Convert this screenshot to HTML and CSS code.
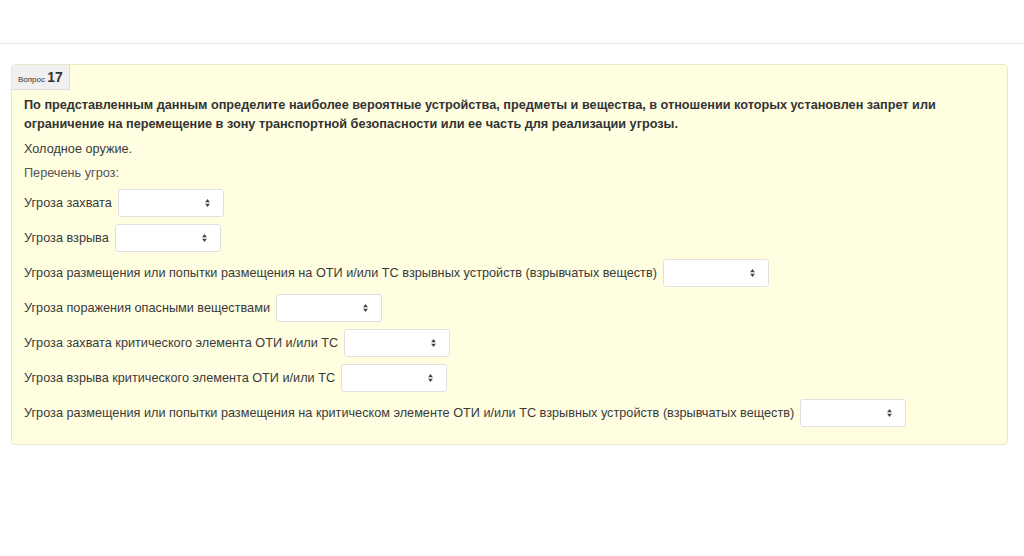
FILE: index.html
```html
<!DOCTYPE html>
<html lang="ru">

<head>
    <meta charset="UTF-8">
    <title>Вопрос 17</title>
    <link rel="stylesheet" href="styles.css">
</head>

<body>
    <div class="topbar"></div>

    <div class="question">
        <div class="qno">Вопрос <b>17</b></div>
        <div class="qtext">
            <p class="lead">По представленным данным определите наиболее вероятные устройства, предметы и вещества, в отношении которых установлен запрет или ограничение на перемещение в зону транспортной безопасности или ее часть для реализации угрозы.</p>
            <p>Холодное оружие.</p>
            <p class="muted">Перечень угроз:</p>

            <div class="row">Угроза захвата <span class="sel"><select></select><svg viewBox="0 0 6 10"><path d="M0 4 L3 0 L6 4Z M0 6 L3 10 L6 6Z" /></svg></span></div>
            <div class="row">Угроза взрыва <span class="sel"><select></select><svg viewBox="0 0 6 10"><path d="M0 4 L3 0 L6 4Z M0 6 L3 10 L6 6Z" /></svg></span></div>
            <div class="row">Угроза размещения или попытки размещения на ОТИ и/или ТС взрывных устройств (взрывчатых веществ) <span class="sel"><select></select><svg viewBox="0 0 6 10"><path d="M0 4 L3 0 L6 4Z M0 6 L3 10 L6 6Z" /></svg></span></div>
            <div class="row">Угроза поражения опасными веществами <span class="sel"><select></select><svg viewBox="0 0 6 10"><path d="M0 4 L3 0 L6 4Z M0 6 L3 10 L6 6Z" /></svg></span></div>
            <div class="row">Угроза захвата критического элемента ОТИ и/или ТС <span class="sel"><select></select><svg viewBox="0 0 6 10"><path d="M0 4 L3 0 L6 4Z M0 6 L3 10 L6 6Z" /></svg></span></div>
            <div class="row">Угроза взрыва критического элемента ОТИ и/или ТС <span class="sel"><select></select><svg viewBox="0 0 6 10"><path d="M0 4 L3 0 L6 4Z M0 6 L3 10 L6 6Z" /></svg></span></div>
            <div class="row">Угроза размещения или попытки размещения на критическом элементе ОТИ и/или ТС взрывных устройств (взрывчатых веществ) <span class="sel"><select></select><svg viewBox="0 0 6 10"><path d="M0 4 L3 0 L6 4Z M0 6 L3 10 L6 6Z" /></svg></span></div>
        </div>
    </div>
</body>

</html>
```

FILE: styles.css
```css
* {
    margin: 0;
    padding: 0;
    box-sizing: border-box;
}

body {
    font-family: 'Liberation Sans', Arial, sans-serif;
    font-size: 12.7px;
    color: #3a3a3a;
    background: #fff;
}

.topbar {
    height: 44px;
    border-bottom: 1px solid #e7e7e7;
}

.question {
    margin: 20px 16px 0 11px;
    background: #fffee1;
    border: 1px solid #e9e8c6;
    border-radius: 4px;
    padding-bottom: 10px;
}

.qno {
    display: inline-block;
    background: #f0f0f0;
    border: 1px solid #dcdcdc;
    border-width: 0 1px 1px 0;
    padding: 4px 6px 4px 6px;
    font-size: 8px;
    color: #333;
}

.qno b {
    font-size: 14px;
}

.qtext {
    padding: 6px 12px 0 12px;
}

.qtext p {
    margin-bottom: 7px;
    line-height: 17px;
}

.lead {
    font-weight: bold;
    line-height: 19px !important;
    padding-right: 40px;
    color: #333;
}

.muted {
    color: #555;
}

.row {
    display: flex;
    align-items: center;
    gap: 6px;
    height: 28px;
    margin-bottom: 7px;
    white-space: nowrap;
}

.sel {
    position: relative;
    display: inline-block;
    width: 106px;
    height: 28px;
}

.sel select {
    appearance: none;
    width: 100%;
    height: 100%;
    background: #fff;
    border: 1px solid #e0e0e0;
    border-radius: 3px;
}

.sel svg {
    position: absolute;
    right: 14px;
    top: 10px;
    width: 5px;
    height: 8px;
    fill: #444;
}
```
